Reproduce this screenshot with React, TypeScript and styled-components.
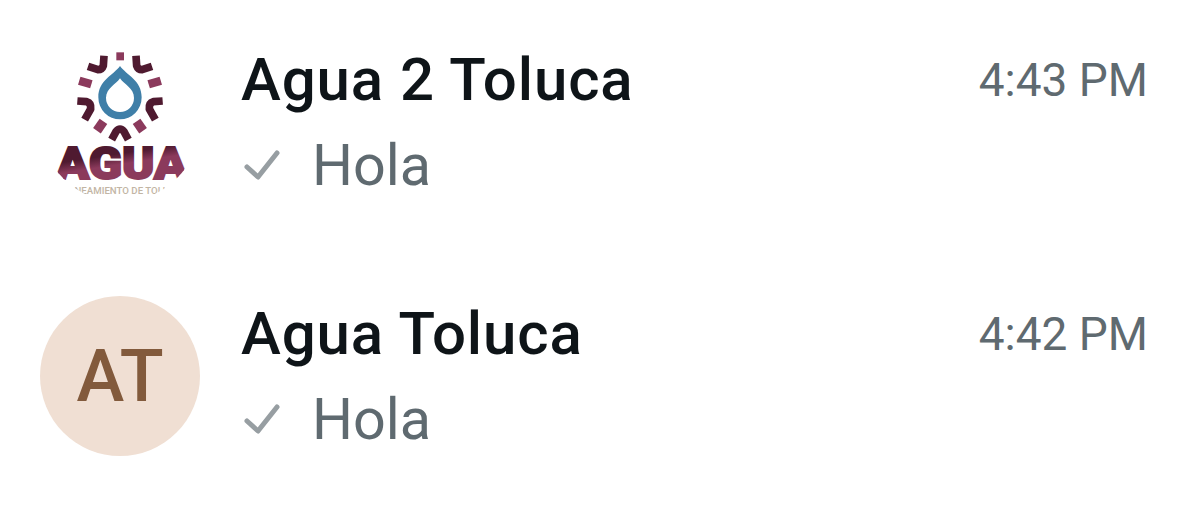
import styled, { createGlobalStyle } from 'styled-components';

const Global = createGlobalStyle`
  html, body { margin: 0; background: #fff; }
  body { font-family: Roboto, "Noto Sans", sans-serif; overflow: hidden; }
`;

const List = styled.div`
  display: flex;
  flex-direction: column;
  gap: 94px;
  padding: 42px 52px 0 40px;
`;

const Row = styled.div`
  display: flex;
  gap: 41px;
  height: 160px;
`;

const Avatar = styled.div`
  flex: none;
  width: 160px;
  height: 160px;
  border-radius: 50%;
  overflow: hidden;
  display: flex;
  align-items: center;
  justify-content: center;
  background: #f0dfd3;
  color: #825a3c;
  font-size: 72px;
  font-weight: 500;
`;

const LogoAvatar = styled(Avatar)`
  background: #fff;
`;

const Body = styled.div`
  flex: 1;
  min-width: 0;
  display: flex;
  flex-direction: column;
`;

const TopLine = styled.div`
  flex: none;
  display: flex;
  justify-content: space-between;
  align-items: flex-start;
  height: 80px;
`;

const Name = styled.div`
  font-size: 60px;
  font-weight: 500;
  letter-spacing: 0.9px;
  line-height: 76px;
  color: #0e1418;
`;

const Time = styled.div`
  font-size: 46px;
  line-height: 76px;
  color: #5f6a70;
`;

const Preview = styled.div`
  flex: none;
  display: flex;
  align-items: center;
  gap: 31px;
  height: 86px;
  font-size: 57.5px;
  color: #5f6a70;
`;

const dark = '#4f1a30';
const pink = '#8b3a5c';

const Logo = () => (
  <svg width="160" height="160" viewBox="30 36 480 480">
    <defs>
      <linearGradient id="agua" x1="0" y1="0" x2="0.4" y2="1">
        <stop offset="0.42" stopColor={dark} />
        <stop offset="0.6" stopColor={pink} />
      </linearGradient>
    </defs>
    <path
      d="M270 108C290 136 335 150 335 202A65 66 0 0 1 205 202C205 150 250 136 270 108Z"
      fill="#3f7fa8"
    />
    <path
      d="M270 145C282 163 312 175 312 204A42 42 0 0 1 228 204C228 175 258 163 270 145Z"
      fill="#fff"
    />
    <g transform="translate(120 45)" fill="none" strokeLinejoin="round">
      <rect x="139" y="22" width="23" height="24" fill={pink} />
      <g stroke={dark} strokeWidth="23">
        <path d="M102 32L100 62Q96 74 84 74L54 64" />
        <path d="M198 32L200 62Q204 74 216 74L246 64" />
        <path d="M22 168L50 170Q64 174 62 192L44 224" />
        <path d="M278 168L250 170Q236 174 238 192L256 224" />
        <path d="M125 284L138 260Q150 244 162 260L175 284" />
      </g>
      <g fill={pink}>
        <rect x="27" y="100" width="38" height="25" transform="rotate(17 46 112)" />
        <rect x="235" y="100" width="38" height="25" transform="rotate(-17 254 112)" />
        <rect x="76" y="226" width="28" height="34" transform="rotate(35 90 244)" />
        <rect x="196" y="226" width="28" height="34" transform="rotate(-35 210 244)" />
      </g>
    </g>
    <text
      x="78"
      y="448"
      textLength="394"
      lengthAdjust="spacingAndGlyphs"
      fontSize="132"
      fontWeight="900"
      fill="url(#agua)"
      stroke="url(#agua)"
      strokeWidth="6"
    >
      AGUA
    </text>
    <text x="276" y="491" textAnchor="middle" fontSize="29" fontWeight="500" fill="#c2b5a4">
      SANEAMIENTO DE TOLUCA
    </text>
  </svg>
);

const Check = () => (
  <svg width="40" height="40" viewBox="0 0 40 40" fill="none">
    <path
      d="M6 22L17 32L36 8"
      stroke="#979ea2"
      strokeWidth="5"
      strokeLinecap="round"
      strokeLinejoin="round"
    />
  </svg>
);

export default function App() {
  return (
    <>
      <Global />
      <List>
        <Row>
          <LogoAvatar>
            <Logo />
          </LogoAvatar>
          <Body>
            <TopLine>
              <Name>Agua 2 Toluca</Name>
              <Time>4:43 PM</Time>
            </TopLine>
            <Preview>
              <Check />
              Hola
            </Preview>
          </Body>
        </Row>
        <Row>
          <Avatar>AT</Avatar>
          <Body>
            <TopLine>
              <Name>Agua Toluca</Name>
              <Time>4:42 PM</Time>
            </TopLine>
            <Preview>
              <Check />
              Hola
            </Preview>
          </Body>
        </Row>
      </List>
    </>
  );
}
